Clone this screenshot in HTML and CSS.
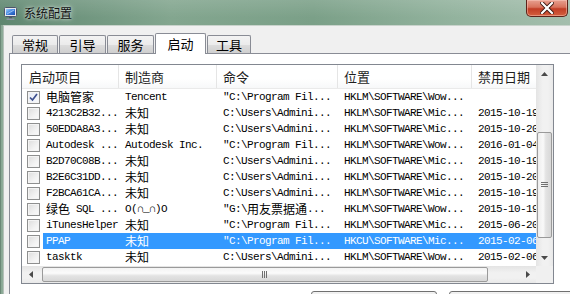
FILE: index.html
```html
<!DOCTYPE html>
<html lang="zh-CN">
<head>
    <meta charset="UTF-8">
    <meta name="viewport" content="width=device-width, initial-scale=1.0">
    <title>系统配置</title>
    <link rel="stylesheet" href="styles.css">
</head>
<body>
<div class="window">
    <div class="titlebar">
        <svg class="app-icon" width="15" height="15" viewBox="0 0 15 15">
            <defs>
                <linearGradient id="scr" x1="0" y1="0" x2="1" y2="1">
                    <stop offset="0" stop-color="#9fd0ff"/>
                    <stop offset="0.5" stop-color="#3d82e0"/>
                    <stop offset="1" stop-color="#1f4fae"/>
                </linearGradient>
            </defs>
            <rect x="1.5" y="1.5" width="12" height="9" rx="1" fill="#e6e9ef" stroke="#4d566b"/>
            <rect x="3" y="3" width="9" height="6" fill="url(#scr)"/>
            <path d="M4 8 L11 4" stroke="#e8f3ff" stroke-width="0.8" opacity="0.7"/>
            <rect x="6" y="11" width="3" height="1.5" fill="#4d566b"/>
            <rect x="3.5" y="12.5" width="8" height="1.5" rx="0.5" fill="#8a93a6"/>
        </svg>
        <span class="title">系统配置</span>
        <div class="close">
            <svg width="14" height="12" viewBox="0 0 14 12">
                <path d="M2 1 L12 11 M12 1 L2 11" stroke="#3b1710" stroke-width="4" stroke-linecap="square"/>
                <path d="M2 1 L12 11 M12 1 L2 11" stroke="#fff" stroke-width="2.2" stroke-linecap="square"/>
            </svg>
        </div>
    </div>
    <div class="body">
        <div class="tabs">
            <div class="tab">常规</div>
            <div class="tab">引导</div>
            <div class="tab">服务</div>
            <div class="tab active">启动</div>
            <div class="tab">工具</div>
        </div>
        <div class="panel">
            <div class="list">
                <div class="list-top">
                    <div class="viewport">
                        <div class="header cols">
                            <div class="hcell first">启动项目</div>
                            <div class="hcell">制造商</div>
                            <div class="hcell">命令</div>
                            <div class="hcell">位置</div>
                            <div class="hcell">禁用日期</div>
                        </div>
                        <div class="rows">
                            <div class="row cols">
                                <div class="cell first"><span class="check on"><svg width="11" height="11" viewBox="0 0 11 11"><path d="M2 5.5 L4.5 8 L9 2" stroke="#3d4f8e" stroke-width="1.7" fill="none"/></svg></span><span class="cn">电脑管家</span></div>
                                <div class="cell">Tencent</div>
                                <div class="cell">"C:\Program Fil...</div>
                                <div class="cell">HKLM\SOFTWARE\Wow...</div>
                                <div class="cell"></div>
                            </div>
                            <div class="row cols">
                                <div class="cell first"><span class="check"></span>4213C2B32...</div>
                                <div class="cell cn">未知</div>
                                <div class="cell">C:\Users\Admini...</div>
                                <div class="cell">HKLM\SOFTWARE\Mic...</div>
                                <div class="cell">2015-10-19</div>
                            </div>
                            <div class="row cols">
                                <div class="cell first"><span class="check"></span>50EDDA8A3...</div>
                                <div class="cell cn">未知</div>
                                <div class="cell">C:\Users\Admini...</div>
                                <div class="cell">HKLM\SOFTWARE\Mic...</div>
                                <div class="cell">2015-10-20</div>
                            </div>
                            <div class="row cols">
                                <div class="cell first"><span class="check"></span>Autodesk ...</div>
                                <div class="cell">Autodesk Inc.</div>
                                <div class="cell">"C:\Program Fil...</div>
                                <div class="cell">HKLM\SOFTWARE\Wow...</div>
                                <div class="cell">2016-01-04</div>
                            </div>
                            <div class="row cols">
                                <div class="cell first"><span class="check"></span>B2D70C08B...</div>
                                <div class="cell cn">未知</div>
                                <div class="cell">C:\Users\Admini...</div>
                                <div class="cell">HKLM\SOFTWARE\Mic...</div>
                                <div class="cell">2015-10-19</div>
                            </div>
                            <div class="row cols">
                                <div class="cell first"><span class="check"></span>B2E6C31DD...</div>
                                <div class="cell cn">未知</div>
                                <div class="cell">C:\Users\Admini...</div>
                                <div class="cell">HKLM\SOFTWARE\Mic...</div>
                                <div class="cell">2015-10-20</div>
                            </div>
                            <div class="row cols">
                                <div class="cell first"><span class="check"></span>F2BCA61CA...</div>
                                <div class="cell cn">未知</div>
                                <div class="cell">C:\Users\Admini...</div>
                                <div class="cell">HKLM\SOFTWARE\Mic...</div>
                                <div class="cell">2015-10-19</div>
                            </div>
                            <div class="row cols">
                                <div class="cell first"><span class="check"></span><span class="cn">绿色</span>&nbsp;SQL ...</div>
                                <div class="cell">O(∩_∩)O</div>
                                <div class="cell">"G:\<span class="cn">用友票据通</span>...</div>
                                <div class="cell">HKLM\SOFTWARE\Wow...</div>
                                <div class="cell">2015-10-19</div>
                            </div>
                            <div class="row cols">
                                <div class="cell first"><span class="check"></span>iTunesHelper</div>
                                <div class="cell cn">未知</div>
                                <div class="cell">"C:\Program Fil...</div>
                                <div class="cell">HKLM\SOFTWARE\Mic...</div>
                                <div class="cell">2015-06-20</div>
                            </div>
                            <div class="row cols selected">
                                <div class="cell first"><span class="check"></span>PPAP</div>
                                <div class="cell cn">未知</div>
                                <div class="cell">"C:\Program Fil...</div>
                                <div class="cell">HKCU\SOFTWARE\Mic...</div>
                                <div class="cell">2015-02-06</div>
                            </div>
                            <div class="row cols">
                                <div class="cell first"><span class="check"></span>tasktk</div>
                                <div class="cell cn">未知</div>
                                <div class="cell">C:\Users\Admini...</div>
                                <div class="cell">HKLM\SOFTWARE\Wow...</div>
                                <div class="cell">2015-02-06</div>
                            </div>
                        </div>
                    </div>
                    <div class="vscroll">
                        <div class="sbtn"><svg width="7" height="4" viewBox="0 0 7 4"><polygon points="3.5,0 7,4 0,4" fill="#4a4a4a"/></svg></div>
                        <div class="vthumb">
                            <svg width="7" height="6" viewBox="0 0 7 6"><path d="M0 0.5 H7 M0 2.5 H7 M0 4.5 H7" stroke="#707070"/></svg>
                        </div>
                        <div class="track"></div>
                        <div class="sbtn"><svg width="7" height="4" viewBox="0 0 7 4"><polygon points="0,0 7,0 3.5,4" fill="#4a4a4a"/></svg></div>
                    </div>
                </div>
                <div class="hscroll">
                    <div class="sbtn"><svg width="4" height="7" viewBox="0 0 4 7"><polygon points="4,0 4,7 0,3.5" fill="#4a4a4a"/></svg></div>
                    <div class="hthumb">
                        <svg width="6" height="7" viewBox="0 0 6 7"><path d="M0.5 0 V7 M2.5 0 V7 M4.5 0 V7" stroke="#707070"/></svg>
                    </div>
                    <div class="track"></div>
                    <div class="sbtn"><svg width="4" height="7" viewBox="0 0 4 7"><polygon points="0,0 0,7 4,3.5" fill="#4a4a4a"/></svg></div>
                    <div class="corner"></div>
                </div>
            </div>
            <div class="buttons">
                <button class="btn wide">全部启用</button>
                <button class="btn">全部禁用</button>
            </div>
        </div>
    </div>
</div>
</body>
</html>
```

FILE: styles.css
```css
body{
    margin: 0;
    font-family: "Noto Sans CJK SC", "DejaVu Sans", sans-serif;
    overflow: hidden;
}
.window{
    width: 570px;
    height: 294px;
    overflow: hidden;
    background: linear-gradient(90deg, #4f6d5c 0px, #87a592 1px, #8fae9a 3px);
}
.titlebar{
    height: 25px;
    display: flex;
    align-items: center;
    background:
        linear-gradient(180deg, rgba(255,255,255,0.12), rgba(255,255,255,0) 70%),
        linear-gradient(90deg, #5f8770 0%, #83a68f 30%, #7ba088 55%, #93b39e 80%, #a4bead 100%);
}
.app-icon{
    margin-left: 3px;
    margin-top: 1px;
}
.title{
    margin-left: 6px;
    font-size: 12px;
    color: #111;
    text-shadow: 0 0 6px rgba(255,255,255,0.7), 0 0 3px rgba(255,255,255,0.6);
}
.close{
    margin-left: auto;
    margin-right: 2px;
    align-self: flex-start;
    width: 42px;
    height: 17px;
    display: flex;
    align-items: center;
    justify-content: center;
    box-sizing: border-box;
    border: 1px solid #5d2219;
    border-top: none;
    border-radius: 0 0 5px 5px;
    background: linear-gradient(180deg, #e7a090 0%, #d8725c 45%, #c13d25 55%, #d4603f 100%);
    box-shadow: inset 0 0 0 1px rgba(255,210,200,0.45);
}

.body{
    margin-left: 3px;
    height: 269px;
    background: #f0f0f0;
    border-top: 1px solid #c9d3cc;
    border-left: 1px solid #b4c0b8;
    overflow: hidden;
}
.tabs{
    display: flex;
    align-items: flex-end;
    gap: 1px;
    padding: 7px 0 0 8px;
    height: 20px;
}
.tab{
    width: 44px;
    height: 17px;
    border: 1px solid #898c95;
    border-bottom: none;
    border-radius: 2px 2px 0 0;
    background: linear-gradient(180deg, #f3f3f3 0%, #ebebeb 50%, #dddddd 51%, #cfcfcf 100%);
    font-size: 13px;
    line-height: 18px;
    text-align: center;
    color: #000;
}
.tab:nth-child(2), .tab:nth-child(3){
    width: 45px;
}
.tab.active{
    width: 49px;
    height: 20px;
    margin: 0 0 -1px 0;
    background: #fff;
    position: relative;
    z-index: 1;
    line-height: 20px;
}
.tab:last-child{
    width: 42px;
}

.panel{
    margin-left: 5px;
    width: 554px;
    height: 260px;
    border: 1px solid #898c95;
    background: #fff;
    padding: 10px 10px 0 11px;
}
.list{
    width: 531px;
    border: 1px solid #828790;
    background: #fff;
}
.list-top{
    display: flex;
    height: 201px;
}
.viewport{
    width: 514px;
    overflow: hidden;
}
.cols{
    display: grid;
    grid-template-columns: 97px 98px 121px 134px 80px;
    width: 530px;
}
.header{
    height: 23px;
    border-bottom: 1px solid #eaeaea;
    background: linear-gradient(180deg, #ffffff 0%, #ffffff 60%, #f7f8f9 100%);
}
.hcell{
    border-right: 1px solid #e5e5e5;
    font-size: 13px;
    line-height: 23px;
    padding-left: 6px;
    color: #1e1e1e;
    white-space: nowrap;
    overflow: hidden;
}
.hcell.first{
    padding-left: 7px;
}
.rows{
    height: 177px;
}
.row{
    height: 16px;
}
.row.selected{
    background: linear-gradient(90deg, transparent 21px, #3399ff 21px);
    color: #fff;
}
.cell{
    font-family: "Liberation Mono", "Noto Sans CJK SC", monospace;
    font-size: 11px;
    letter-spacing: -0.6px;
    line-height: 16px;
    padding-left: 6px;
    white-space: nowrap;
    overflow: hidden;
    display: flex;
    align-items: center;
}
.cell.first{
    padding-left: 5px;
}
.cn{
    font-family: "Noto Sans CJK SC", sans-serif;
    font-size: 12px;
    letter-spacing: 0;
}
.check{
    width: 11px;
    height: 11px;
    margin-right: 6px;
    border: 1px solid #8e8f8f;
    background: linear-gradient(135deg, #dcdcdc 0%, #f2f2f2 60%, #fbfbfb 100%);
    box-shadow: inset 0 0 0 1px #f4f4f4;
    display: flex;
    flex: none;
}
.check.on{
    background: linear-gradient(135deg, #e7ecf6 0%, #f7f8fb 100%);
}

.vscroll{
    width: 17px;
    display: flex;
    flex-direction: column;
    background: linear-gradient(90deg, #e4e4e4, #f1f1f1 40%, #f1f1f1 70%, #e9e9e9);
}
.sbtn{
    width: 17px;
    height: 17px;
    flex: none;
    display: flex;
    align-items: center;
    justify-content: center;
}
.vthumb{
    margin: 50px 1px 0 1px;
    height: 104px;
    border: 1px solid #9a9a9a;
    border-radius: 2px;
    background: linear-gradient(90deg, #eeeeee, #f9f9f9 40%, #e3e3e3 60%, #d8d8d8);
    display: flex;
    align-items: center;
    justify-content: center;
    flex: none;
}
.track{
    flex: 1;
}
.hscroll{
    display: flex;
    height: 17px;
    background: linear-gradient(180deg, #e4e4e4, #f1f1f1 40%, #f1f1f1 70%, #e9e9e9);
}
.hthumb{
    margin: 1px 0 1px 3px;
    width: 444px;
    border: 1px solid #9a9a9a;
    border-radius: 2px;
    background: linear-gradient(180deg, #f3f3f3, #fbfbfb 40%, #e3e3e3 60%, #d8d8d8);
    display: flex;
    align-items: center;
    justify-content: center;
    flex: none;
}
.corner{
    width: 17px;
    background: #f0f0f0;
}

.buttons{
    display: flex;
    justify-content: flex-end;
    gap: 12px;
    padding-right: 1px;
    margin-top: 7px;
}
.btn{
    width: 125px;
    height: 23px;
    border: 1px solid #707070;
    border-radius: 3px;
    background: linear-gradient(180deg, #f2f2f2 0%, #ebebeb 50%, #dddddd 51%, #cfcfcf 100%);
    font-family: "Noto Sans CJK SC", sans-serif;
    font-size: 12px;
}
.btn.wide{
    width: 126px;
}
```
